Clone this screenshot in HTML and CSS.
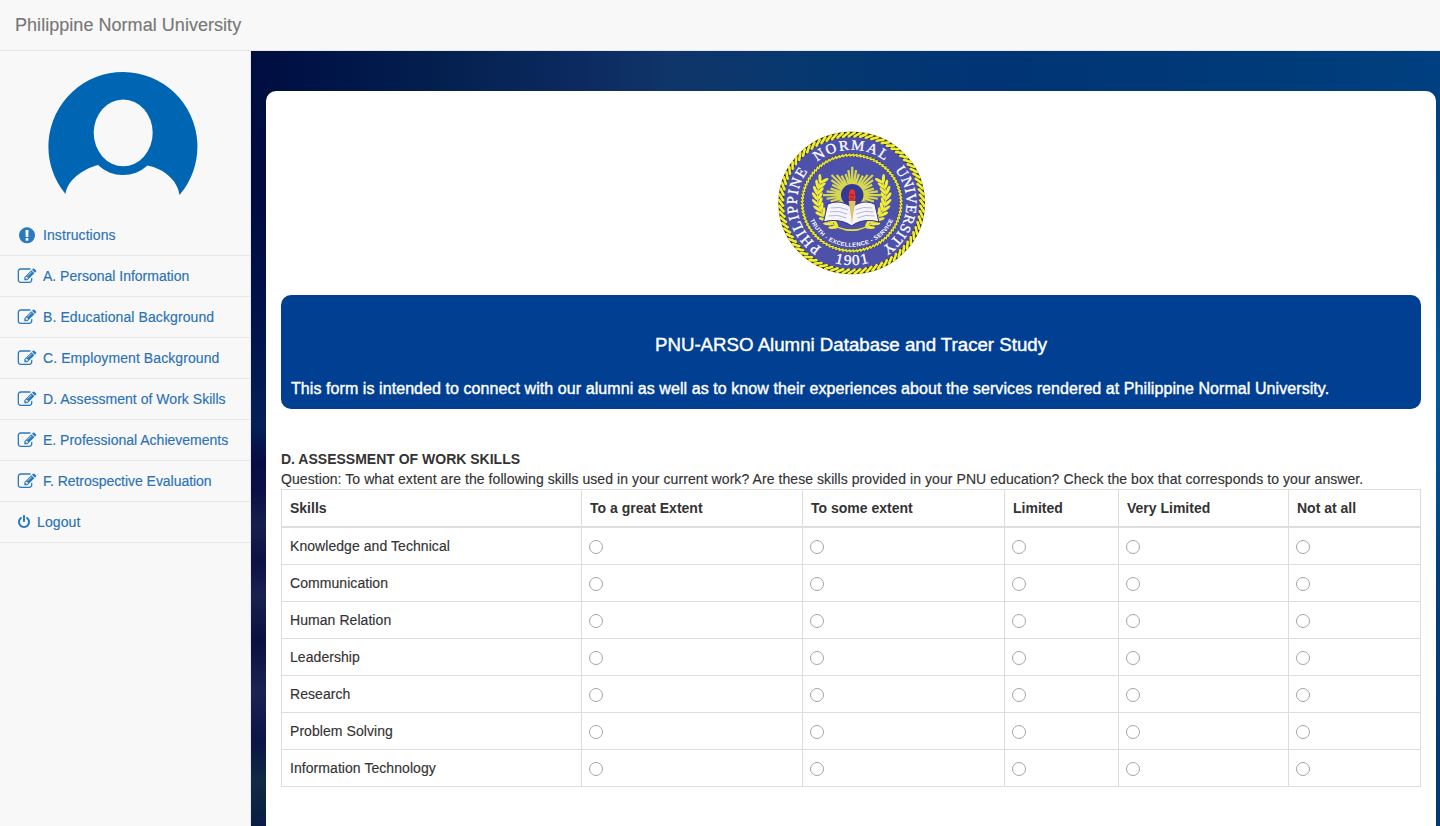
FILE: index.html
```html
<!DOCTYPE html>
<html lang="en">
<head>
<meta charset="utf-8">
<title>Philippine Normal University</title>
<link rel="stylesheet" href="styles.css">
</head>
<body>
<svg class="defs" width="0" height="0">
  <symbol id="edit" viewBox="0 0 1792 1792"><path d="M888 1184l116-116-152-152-116 116v56h96v96h56zm440-720q-16-16-33 1l-350 350q-17 17-1 33t33-1l350-350q17-17 1-33zm80 594v190q0 119-84.500 203.500t-203.500 84.500h-832q-119 0-203.500-84.500t-84.500-203.500v-832q0-119 84.500-203.500t203.500-84.500h832q63 0 117 25 15 7 18 23 3 17-9 29l-49 49q-14 14-32 8-23-6-45-6h-832q-66 0-113 47t-47 113v832q0 66 47 113t113 47h832q66 0 113-47t47-113v-126q0-13 9-22l64-64q15-15 35-7t20 29zm-96-738l288 288-672 672h-288v-288zm444 132l-92 92-288-288 92-92q28-28 68-28t68 28l152 152q28 28 28 68t-28 68z"/></symbol>
  <symbol id="alert" viewBox="0 0 1792 1792"><path d="M896 128q209 0 385.500 103t279.500 279.500 103 385.500-103 385.500-279.500 279.500-385.500 103-385.500-103-279.500-279.500-103-385.500 103-385.500 279.500-279.500 385.500-103zm128 1247v-190q0-14-9-23.500t-22-9.500h-192q-13 0-23 10t-10 23v190q0 13 10 23t23 10h192q13 0 22-9.500t9-23.500zm-2-344l18-621q0-12-10-18-10-8-24-8h-220q-14 0-24 8-10 6-10 18l17 621q0 10 10 17.500t24 7.500h185q14 0 23.500-7.500t10.500-17.500z"/></symbol>
  <symbol id="power" viewBox="0 0 1792 1792"><path d="M1664 896q0 156-61 298t-164 245-245 164-298 61-298-61-245-164-164-245-61-298q0-182 80.500-343t226.500-270q43-32 95.500-25t83.500 50q32 42 24.500 94.500t-49.500 84.500q-98 74-151.500 181t-53.500 228q0 104 40.500 198.500t109.500 163.500 163.500 109.500 198.500 40.500 198.500-40.500 163.500-109.500 109.500-163.500 40.500-198.500q0-121-53.500-228t-151.500-181q-42-32-49.500-84.500t24.500-94.500q31-43 84-50t95 25q146 109 226.500 270t80.500 343zm-640-768v640q0 52-38 90t-90 38-90-38-38-90v-640q0-52 38-90t90-38 90 38 38 90z"/></symbol>
</svg>
<header class="navbar"><span class="brand">Philippine Normal University</span></header>
<div class="layout">
  <nav class="sidebar">
    <svg class="avatar" width="150" height="123" viewBox="48 72 150 123"><path fill="#0065b3" fill-rule="evenodd" d="M65.500 194A74.500 74.500 0 1 1 179.500 195C178 181 164 168.500 147.500 165.500A36 36 0 0 1 98 165C84 168.500 67 180 65.500 194Z"/><ellipse cx="123.200" cy="132.800" rx="29.500" ry="33.400" fill="#f8f8f8"/></svg>
    <ul class="menu">
      <li><a><svg class="icon icon-lg"><use href="#alert"/></svg><span class="wide">Instructions</span></a></li>
      <li><a><svg class="icon icon-lg"><use href="#edit"/></svg><span>A. Personal Information</span></a></li>
      <li><a><svg class="icon icon-lg"><use href="#edit"/></svg><span class="wide">B. Educational Background</span></a></li>
      <li><a><svg class="icon icon-lg"><use href="#edit"/></svg><span class="wide">C. Employment Background</span></a></li>
      <li><a><svg class="icon icon-lg"><use href="#edit"/></svg><span class="roomy">D. Assessment of Work Skills</span></a></li>
      <li><a><svg class="icon icon-lg"><use href="#edit"/></svg><span>E. Professional Achievements</span></a></li>
      <li><a><svg class="icon icon-lg"><use href="#edit"/></svg><span class="snug">F. Retrospective Evaluation</span></a></li>
      <li><a><svg class="icon"><use href="#power"/></svg><span class="wide">Logout</span></a></li>
    </ul>
  </nav>
  <main class="content">
    <section class="card">
      <svg class="seal" width="160" height="155" viewBox="0 0 160 155">
        <defs>
          <path id="ring" d="M80.500 131.500A53.500 53.500 0 0 1 80.500 24.500A53.500 53.500 0 0 1 80.500 131.500"/>
          <path id="year" d="M18 78A62.500 62.500 0 0 0 143 78"/>
          <path id="motto" d="M36.500 78A44 44 0 0 0 124.500 78"/>
        </defs>
        <g transform="translate(80.700 78) scale(1.025 .995) translate(-80.500 -78)">
          <circle cx="80.500" cy="78" r="69" fill="#4d51aa"/>
          <g id="outer-rope"></g>
          <g id="inner-rope"></g>
          <g class="seal-name">
            <text><textPath href="#ring" startOffset="31" textLength="87" lengthAdjust="spacing">PHILIPPINE</textPath></text>
            <text><textPath href="#ring" startOffset="131.500" textLength="71" lengthAdjust="spacing">NORMAL</textPath></text>
            <text><textPath href="#ring" startOffset="216" textLength="89" lengthAdjust="spacing">UNIVERSITY</textPath></text>
            <text class="seal-year" text-anchor="middle"><textPath href="#year" startOffset="50%" textLength="34">1901</textPath></text>
          </g>
          <text class="seal-motto" text-anchor="middle"><textPath href="#motto" startOffset="50%" textLength="103">TRUTH - EXCELLENCE - SERVICE</textPath></text>
          <g id="rays"></g>
          <circle cx="81" cy="70" r="11" fill="#343a94"/>
          <g id="laurel"></g>
          <path d="M57 79Q69 74 80.500 82Q92 74 103 79L107 97Q92 93 80.500 101Q68 93 53 97Z" fill="#f5f5fb" stroke="#34378c" stroke-width="1"/>
          <path d="M60 83q9-2 17 2M59 87q9-2 17 2M58 91q9-2 17 2M101 83q-9-2-17 2M102 87q-9-2-17 2M103 91q-9-2-17 2" fill="none" stroke="#a5a8d4" stroke-width=".8"/>
          <path d="M77.500 76h7l-2.500 13-1.200 10-1.300-10z" fill="#d9c56a"/>
          <path d="M81 64q4 2 2.500 5q2 3-.5 7h-4q-2.500-3-1-6q-1-4 3-6z" fill="#e8332d"/>
          <path d="M79 69l4 2m-4 2l3 1" stroke="#5b1b35" stroke-width=".8"/>
        </g>
      </svg>
      <div class="banner">
        <h1>PNU-ARSO Alumni Database and Tracer Study</h1>
        <p>This form is intended to connect with our alumni as well as to know their experiences about the services rendered at Philippine Normal University.</p>
      </div>
      <h2>D. ASSESSMENT OF WORK SKILLS</h2>
      <p class="question">Question: To what extent are the following skills used in your current work? Are these skills provided in your PNU education? Check the box that corresponds to your answer.</p>
      <table class="skills">
        <colgroup><col class="c1"><col class="c2"><col class="c3"><col class="c4"><col class="c5"><col class="c6"></colgroup>
        <thead><tr><th>Skills</th><th>To a great Extent</th><th>To some extent</th><th>Limited</th><th>Very Limited</th><th>Not at all</th></tr></thead>
        <tbody>
          <tr><td>Knowledge and Technical</td><td><input type="radio" name="s1"></td><td><input type="radio" name="s1"></td><td><input type="radio" name="s1"></td><td><input type="radio" name="s1"></td><td><input type="radio" name="s1"></td></tr>
          <tr><td>Communication</td><td><input type="radio" name="s2"></td><td><input type="radio" name="s2"></td><td><input type="radio" name="s2"></td><td><input type="radio" name="s2"></td><td><input type="radio" name="s2"></td></tr>
          <tr><td>Human Relation</td><td><input type="radio" name="s3"></td><td><input type="radio" name="s3"></td><td><input type="radio" name="s3"></td><td><input type="radio" name="s3"></td><td><input type="radio" name="s3"></td></tr>
          <tr><td>Leadership</td><td><input type="radio" name="s4"></td><td><input type="radio" name="s4"></td><td><input type="radio" name="s4"></td><td><input type="radio" name="s4"></td><td><input type="radio" name="s4"></td></tr>
          <tr><td>Research</td><td><input type="radio" name="s5"></td><td><input type="radio" name="s5"></td><td><input type="radio" name="s5"></td><td><input type="radio" name="s5"></td><td><input type="radio" name="s5"></td></tr>
          <tr><td>Problem Solving</td><td><input type="radio" name="s6"></td><td><input type="radio" name="s6"></td><td><input type="radio" name="s6"></td><td><input type="radio" name="s6"></td><td><input type="radio" name="s6"></td></tr>
          <tr><td>Information Technology</td><td><input type="radio" name="s7"></td><td><input type="radio" name="s7"></td><td><input type="radio" name="s7"></td><td><input type="radio" name="s7"></td><td><input type="radio" name="s7"></td></tr>
        </tbody>
      </table>
    </section>
  </main>
</div>
<script src="seal.js"></script>
</body>
</html>
```
FILE: styles.css
```css
* { box-sizing: border-box; }
body { margin: 0; height: 826px; overflow: hidden; display: flex; flex-direction: column; font: 14px/20px "Liberation Sans", Arial, sans-serif; color: #333; background: #f8f8f8; -webkit-text-stroke: .15px; }
h1, h2, p, ul { margin: 0; padding: 0; }
.defs { display: none; }
.navbar { flex: none; height: 51px; padding: 15px; border-bottom: 1px solid #e7e7e7; background: #f8f8f8; }
.brand { font-size: 18px; line-height: 20px; letter-spacing: .04px; color: #777; }
.layout { flex: 1; display: flex; min-height: 0; }
.sidebar { flex: none; width: 251px; border-right: 1px solid #e7e7e7; padding-top: 21px; }
.avatar { display: block; margin: 0 0 20px 48px; }
.menu { list-style: none; }
.menu li { height: 41px; border-bottom: 1px solid #e7e7e7; padding: 10px 15px; color: #2a72b5; }
.menu a { display: flex; align-items: center; gap: 4px; white-space: nowrap; }
.wide { letter-spacing: .09px; }
.roomy { letter-spacing: .03px; }
.snug { letter-spacing: -.04px; }
.icon { flex: none; width: 18px; height: 14px; fill: #2a7abf; }
.icon-lg { width: 24px; height: 18.670px; }
.content { flex: 1; min-width: 0; min-height: 0; padding: 40px 4px 0 15px; display: flex;
  background:
    linear-gradient(180deg, #000d4000 30px, #000b3e 130px, #001048 240px, #021a52 330px, #042058 375px, #080c44 410px, #0a1045 440px, #16204c 475px, #0d1145 510px, #18224f 545px, #0a103f 590px, #192452 640px, #0b1546 690px, #102a44 730px, #0a1c44 775px) left / 15px 100% no-repeat,
    linear-gradient(180deg, #00408000 30px, #004b88 200px, #0059a0 330px, #00508f 420px, #003f7c 520px, #003a74 775px) right / 4px 100% no-repeat,
    linear-gradient(90deg, #000d40 0, #001448 80px, #04204f 190px, #0c2a60 330px, #0f3569 420px, #06386f 560px, #003475 740px, #003a78 1000px, #004080 1189px); }
.card { flex: 1; min-width: 0; overflow: hidden; border-radius: 10px 10px 0 0; background: #fff; padding: 34px 15px 0; }
.seal { display: block; margin: 0 auto; }
.seal-name { font: 400 14.500px "Liberation Serif", serif; fill: #fff; stroke: #fff; stroke-width: .3px; -webkit-text-stroke: .3px #fff; }
.seal-year { font-size: 15px; }
.seal-motto { font: 700 5.800px "Liberation Sans", sans-serif; fill: #fff; -webkit-text-stroke: 0; }
.banner { height: 114px; margin-top: 15px; border-radius: 10px; background: #003f91; color: #fff; padding: 39px 10px 0; -webkit-text-stroke: .4px; }
.banner h1 { font-size: 18.670px; line-height: 22px; font-weight: 400; text-align: center; }
.banner p { margin-top: 23px; font-size: 16px; line-height: 20px; letter-spacing: .072px; white-space: nowrap; }
h2 { margin-top: 40px; font-size: 14px; line-height: 20px; font-weight: 700; -webkit-text-stroke: 0; }
.question { letter-spacing: .073px; white-space: nowrap; }
.skills { width: 1140px; table-layout: fixed; border-collapse: collapse; }
.skills th, .skills td { border: 1px solid #ddd; padding: 8px; text-align: left; height: 37px; line-height: 20px; }
.skills td { letter-spacing: .06px; }
.skills th { border-bottom-width: 2px; height: 37px; padding: 8px 8px 7px; -webkit-text-stroke: 0; }
.c1 { width: 300px; } .c2 { width: 221px; } .c3 { width: 202px; } .c4 { width: 114px; } .c5 { width: 170px; }
.skills input { appearance: none; display: block; width: 14px; height: 14px; margin: 4px 0 2px -1px; border: 1px solid #a5a5a5; border-radius: 50%; background: #fff; }
```
FILE: seal.js
```js
const point = (r, deg, cx = 80.5, cy = 78) => {
  const a = (deg - 90) * Math.PI / 180;
  return (cx + r * Math.cos(a)).toFixed(2) + ' ' + (cy + r * Math.sin(a)).toFixed(2);
};

// Twisted rope: a dark band crossed by slanted yellow strands.
function rope(id, r, width, count, strand, dark) {
  let d = '';
  for (let i = 0; i < count; i++) {
    const a = i * 360 / count;
    const skew = 360 / count * 0.5;
    d += 'M' + point(r + width / 2, a + skew) + 'L' + point(r - width / 2, a - skew);
  }
  document.getElementById(id).innerHTML =
    `<circle cx="80.5" cy="78" r="${r}" fill="none" stroke="${dark}" stroke-width="${width + 1.2}"/>` +
    `<path d="${d}" stroke="#f0ee33" stroke-width="${strand}" stroke-linecap="round"/>`;
}
rope('outer-rope', 69, 3.8, 76, 2.6, '#2c2c20');
rope('inner-rope', 48.2, 1.8, 88, 1.5, '#3c3e48');

// Sunburst of eight groups of rays, longest in the middle of each group.
let rays = '';
for (let g = 0; g < 8; g++) {
  for (let k = -2; k <= 2; k++) {
    rays += 'M' + point(8, g * 45 + k * 8.5, 81, 70) + 'L' + point(28.5 - Math.abs(k) * 3.2, g * 45 + k * 8.5, 81, 70);
  }
}
document.getElementById('rays').innerHTML = `<path d="${rays}" stroke="#d6d750" stroke-width="2.2"/>`;

// Laurel branches, mirrored about the vertical axis.
let leaves = '';
for (let i = 0; i < 10; i++) {
  const deg = 209 + i * 10;
  const [x, y] = point(33.5, deg, 80.5, 71.5).split(' ');
  for (const turn of [-32, 32]) {
    leaves += `<ellipse cx="${x}" cy="${y}" rx="4.6" ry="1.5" transform="rotate(${deg + turn} ${x} ${y}) translate(2 ${turn > 0 ? 1.6 : -1.6})"/>`;
  }
}
const branch = `<g fill="#f3f033">${leaves}</g><path d="M${point(34, 168, 80.5, 71.5)}A34 34 0 0 1 ${point(33.5, 295, 80.5, 71.5)}" fill="none" stroke="#e5e238" stroke-width="1.4"/>`;
document.getElementById('laurel').innerHTML = branch + `<g transform="translate(161 0) scale(-1 1)">${branch}</g>`;
```
